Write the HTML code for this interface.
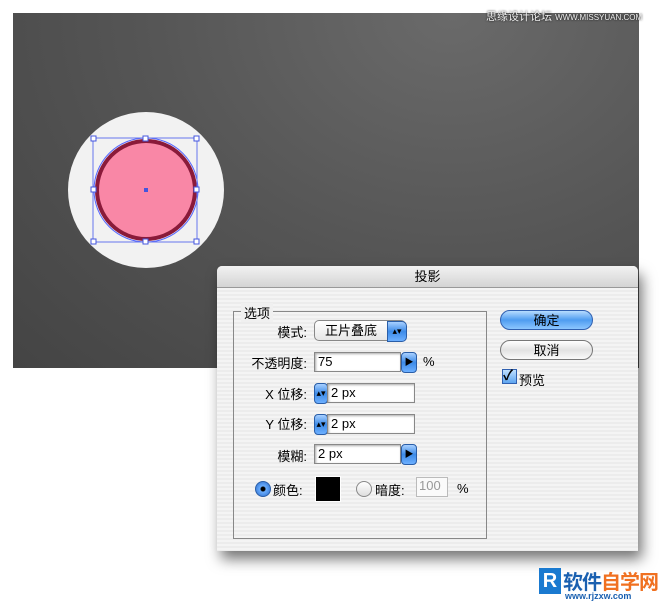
<html><head><style>
body{margin:0;width:662px;height:604px;background:#fff;position:relative;overflow:hidden;font-family:"Liberation Sans","Noto Sans CJK SC",sans-serif;font-size:12px;color:#000}
.a{position:absolute}
.bg{left:13px;top:13px;width:626px;height:355px;background:radial-gradient(ellipse at 70% 0%,#6a6a6a,#555 50%,#444 100%)}
.dlg{left:217px;top:266px;width:421px;height:285px;background:repeating-linear-gradient(#ececec 0 2px,#f4f4f4 2px 4px);box-shadow:4px 8px 14px rgba(0,0,0,.55);border-radius:5px 5px 0 0}
.tb{left:0;top:0;width:421px;height:21px;background:linear-gradient(#f2f2f2,#d4d4d4);border-bottom:1px solid #999;border-radius:5px 5px 0 0;text-align:center;line-height:21px;font-size:13px}
.fs{left:16px;top:45px;width:252px;height:226px;border:1px solid #888}
.lg{left:24px;top:37px;background:#f0f0f0;padding:0 3px;font-size:13px}
.lb{font-size:13px;text-align:right;width:90px}
.in{background:#fff;border:1px solid #888;box-shadow:inset 1px 1px 2px #aaa;height:20px;font-size:13px;line-height:18px;padding-left:3px;box-sizing:border-box}
.bb{background:linear-gradient(#a8d0ff,#3d8be8 50%,#6db0ff);border:1px solid #2a5ea8;border-radius:4px;color:#000;font-size:9px;text-align:center}
.btn{border-radius:11px;height:20px;width:93px;text-align:center;line-height:19px;font-size:13px;box-sizing:border-box}
</style></head><body>
<div class="a bg"></div>
<div class="a" style="left:486px;top:8px;color:#eee;font-size:11px;text-shadow:0 0 2px #000">思缘设计论坛 <span style="font-size:8px">WWW.MISSYUAN.COM</span></div>
<svg class="a" style="left:60px;top:105px" width="180" height="170">
<circle cx="86" cy="85" r="78" fill="#f2f2f2"/>
<circle cx="86" cy="85" r="49" fill="#f987a6" stroke="#8a1a3a" stroke-width="4"/>
<circle cx="86" cy="85" r="52" fill="none" stroke="#5566ff" stroke-width="1"/>
<rect x="33" y="33" width="104" height="104" fill="none" stroke="#6677ee" stroke-width="1"/>
<g fill="#fff" stroke="#4455dd"><rect x="31" y="31" width="5" height="5"/><rect x="83" y="31" width="5" height="5"/><rect x="134" y="31" width="5" height="5"/><rect x="31" y="82" width="5" height="5"/><rect x="134" y="82" width="5" height="5"/><rect x="31" y="134" width="5" height="5"/><rect x="83" y="134" width="5" height="5"/><rect x="134" y="134" width="5" height="5"/></g>
<rect x="84" y="83" width="4" height="4" fill="#4455dd"/>
</svg>
<div class="a dlg">
<div class="a tb">投影</div>
<div class="a fs"></div>
<div class="a lg">选项</div>
<div class="a lb" style="left:0;top:56px">模式:</div>
<div class="a" style="left:97px;top:54px;width:92px;height:21px;border:1px solid #888;border-radius:5px;background:linear-gradient(#fff,#e6e6e6);font-size:13px;line-height:20px;padding-left:10px;box-sizing:border-box">正片叠底</div>
<div class="a bb" style="left:170px;top:55px;width:18px;height:19px;line-height:19px;border-radius:0 5px 5px 0">▴▾</div>
<div class="a lb" style="left:0;top:87px">不透明度:</div>
<div class="a in" style="left:97px;top:86px;width:87px">75</div>
<div class="a bb" style="left:184px;top:86px;width:14px;height:19px;line-height:19px">▶</div>
<div class="a" style="left:206px;top:88px;font-size:13px">%</div>
<div class="a lb" style="left:0;top:118px">X 位移:</div>
<div class="a bb" style="left:97px;top:117px;width:12px;height:19px;line-height:19px">▴▾</div>
<div class="a in" style="left:110px;top:117px;width:88px">2 px</div>
<div class="a lb" style="left:0;top:148px">Y 位移:</div>
<div class="a bb" style="left:97px;top:148px;width:12px;height:19px;line-height:19px">▴▾</div>
<div class="a in" style="left:110px;top:148px;width:88px">2 px</div>
<div class="a lb" style="left:0;top:180px">模糊:</div>
<div class="a in" style="left:97px;top:178px;width:87px">2 px</div>
<div class="a bb" style="left:184px;top:178px;width:14px;height:19px;line-height:19px">▶</div>
<div class="a" style="left:38px;top:215px;width:14px;height:14px;border-radius:50%;background:radial-gradient(#000 2px,#6aaeff 3px,#2a6ac8);border:1px solid #2a5ea8"></div>
<div class="a" style="left:56px;top:214px;font-size:13px">颜色:</div>
<div class="a" style="left:98px;top:210px;width:24px;height:24px;background:#000;border:1px solid #fff"></div>
<div class="a" style="left:139px;top:215px;width:14px;height:14px;border-radius:50%;background:linear-gradient(#fff,#ddd);border:1px solid #888"></div>
<div class="a" style="left:158px;top:214px;font-size:13px">暗度:</div>
<div class="a" style="left:199px;top:211px;width:32px;height:20px;border:1px solid #bbb;background:#fafafa;color:#999;font-size:13px;padding-left:2px;box-sizing:border-box">100</div>
<div class="a" style="left:240px;top:215px;font-size:13px">%</div>
<div class="a btn" style="left:283px;top:44px;background:linear-gradient(#b7dcff,#4f9cf0 50%,#8cc6ff);border:1px solid #3060b0">确定</div>
<div class="a btn" style="left:283px;top:74px;background:linear-gradient(#fff,#e2e2e2 50%,#fafafa);border:1px solid #777">取消</div>
<div class="a" style="left:285px;top:103px;width:13px;height:13px;background:linear-gradient(#bfe0ff,#5ea5f0);border:1px solid #3060b0;font-size:14px;line-height:11px;font-weight:bold">✓</div>
<div class="a" style="left:302px;top:104px;font-size:13px">预览</div>
</div>
<div class="a" style="left:539px;top:568px;width:22px;height:26px;background:#1a7ad0;color:#fff;font-size:20px;font-weight:bold;text-align:center;line-height:26px">R</div>
<div class="a" style="left:563px;top:566px;font-size:20px;font-weight:bold;letter-spacing:-1px"><span style="color:#1a60b0">软件</span><span style="color:#f07020">自学网</span></div>
<div class="a" style="left:565px;top:591px;font-size:9px;font-weight:bold;color:#1a60b0">www.rjzxw.com</div>
</body></html>
